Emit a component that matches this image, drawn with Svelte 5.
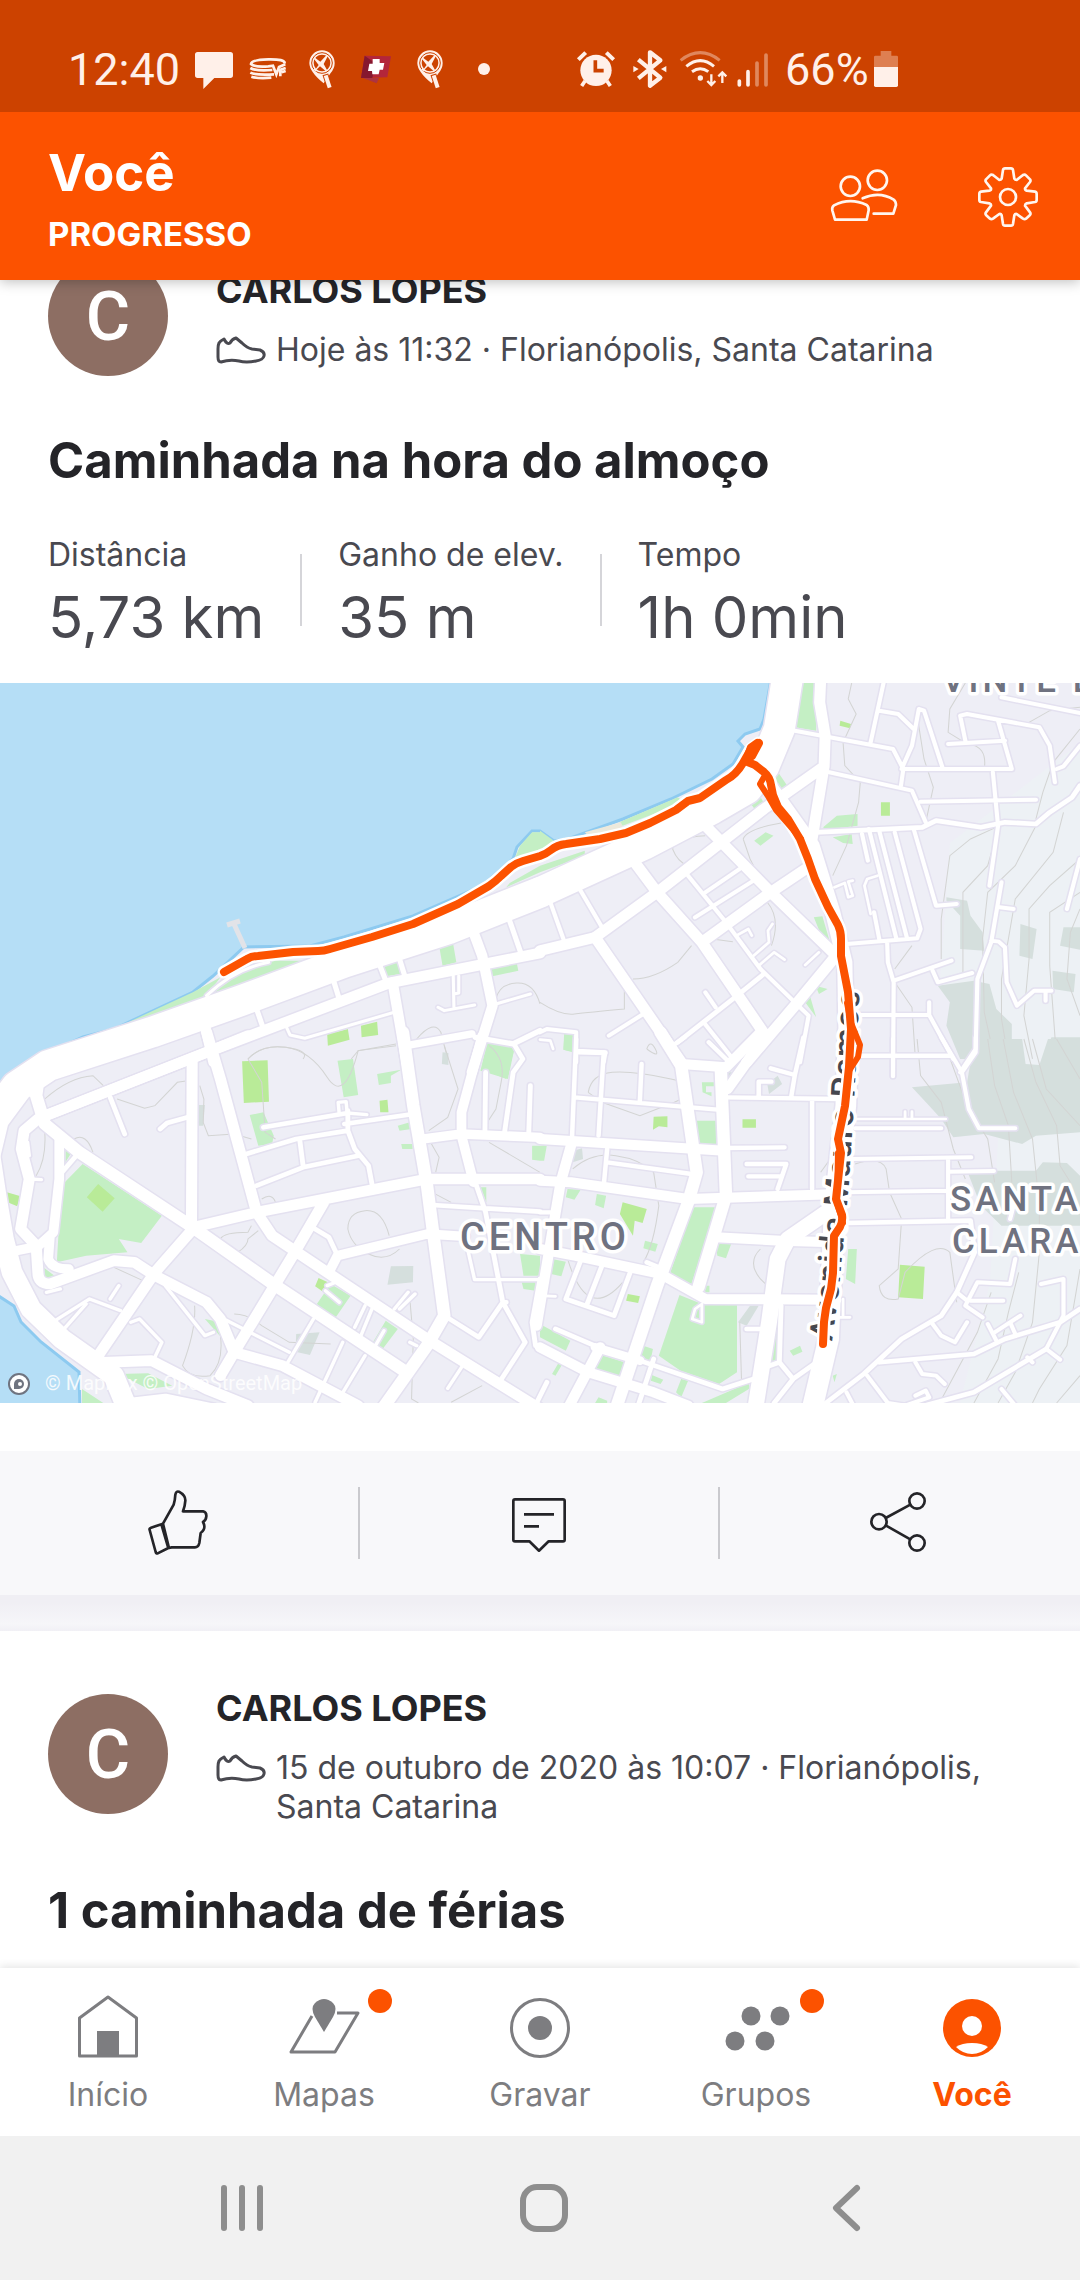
<script>
  // Map geometry is kept in four quadrant grids of 1568 x 1092 units each.
  const quadrants = [
    {
      id: 'nw',
      transform: 'translate(0 -4) scale(0.3444 0.3333)',
      contours: [
        'M720 1140Q760 1095 830 1105T880 1140M1020 1140L1040 1115L1150 1100M1210 1080Q1260 1020 1280 1060L1300 1140M1440 960Q1450 915 1500 912T1568 975'
      ],
      parks: [
        ['g', 'M1510 500L1545 460H1568V530L1490 550ZM1480 612L1568 560V580L1470 625ZM1275 800L1315 790L1325 850L1285 860ZM1110 860L1155 848L1162 885L1120 892ZM1420 870L1500 850L1505 875L1430 892ZM1415 1092L1495 1105L1470 1200L1398 1170ZM600 950L680 880L800 845L880 845L760 890ZM330 1050L560 940L640 895L590 965L400 1035Z'],
        ['l', 'M950 1065L1010 1050L1015 1082L952 1100ZM1048 1040L1095 1028L1098 1068L1050 1075Z']
      ],
      roads: [
        [92, 'M-50 1450L-20 1320L50 1222L140 1160L440 1060L700 965L1000 850L1300 750L1568 640'],
        [32, 'M120 1315L600 1120L1130 912L1568 822'],
        [30, 'M595 1040L620 1150M1140 910L1182 1160M1375 760L1400 830L1430 980L1370 1180'],
        [22, 'M1180 1100L1370 1065'],
        [16, 'M1380 1075L1490 1095L1568 1055'],
        [15, 'M745 990L765 1050M970 910L985 960M1103 860L1120 905M1160 840L1175 890M1478 720L1515 830'],
        [9, 'M832 1045L842 1068L885 1078L1145 1000M1316 890L1318 985M1378 978L1290 995L1272 985M1332 890V942L1318 945M1440 975L1540 945M600 950Q680 870 780 850']
      ]
    },
    {
      id: 'ne',
      transform: 'translate(540 -4) scale(0.3444 0.3333)',
      contours: [
        'M905 12L895 60L918 105L880 190L885 260L930 310L925 370L890 500L850 590M1095 110L1115 240L1142 325L1120 430M1235 12L1190 90L1185 160L1240 195Q1300 200 1290 270M1568 85L1480 95L1420 130M385 510Q390 475 480 470M385 510Q400 550 430 560M590 480Q600 450 700 432M590 480L610 540L620 560M660 670Q700 720 672 800M270 900Q330 900 400 850L440 800M0 970Q60 1010 100 1005T245 990V930M500 780L560 788M1030 870L1080 800M1030 910L1080 985L1090 1140',
        'M1335 440L1250 480L1190 530L1165 720V840M1330 450L1300 560L1228 640V900M1440 440L1380 560L1300 640L1285 780L1290 1000L1320 1140M1520 400L1490 520L1380 660L1360 780L1340 900V1020L1360 1140M1568 540L1480 620L1420 690V840L1405 1010L1430 1140M1568 640L1480 700V860L1500 1140M1568 690L1540 760L1530 900L1568 1010M1568 150L1490 250L1460 340L1440 420'
      ],
      parks: [
        ['g', 'M765 12H802V155L740 145ZM0 455L40 485L30 520L0 530ZM230 430L400 355L420 370L240 440ZM605 365L635 345L652 375L625 392ZM685 270L718 320L700 335L680 300ZM622 485L655 460L678 470L640 500ZM822 445L862 410L922 405V440L830 452ZM850 475L905 465L908 495L880 492ZM795 715L820 712L845 800L815 765ZM770 970L785 955L802 1015ZM800 920L835 930L810 945ZM70 1065L102 1068L95 1120L68 1112ZM550 1140L580 1115L600 1130L590 1140ZM0 560L130 515V530L0 580Z'],
        ['l', 'M872 125L903 135L900 148L870 140ZM990 370H1016V410H990Z'],
        ['d', 'M1180 655L1240 665L1250 710L1285 760L1290 815L1220 810V710L1180 665ZM1395 735L1442 750L1430 840L1392 830ZM1520 745H1568V812L1510 800ZM1488 875L1555 885L1550 940L1490 930ZM1155 920L1260 905L1305 915L1325 990L1370 1035V1140H1220L1180 1040L1190 970ZM1485 1075H1568V1140H1460Z'],
        ['s', 'M130 460L235 430L240 445L150 480Z']
      ],
      roads: [
        [90, 'M0 640L300 498L500 390L600 330L650 262L695 150L718 0'],
        [32, 'M0 815L160 775L340 640L650 390L825 262M815 0L812 70L828 170L825 260L790 480'],
        [44, 'M665 320L700 370L790 500L850 700L885 850L890 1140'],
        [32, 'M275 550L340 640L470 790L655 1070M480 440L670 640L850 820M160 775L410 1150M470 790L670 640L800 550M860 830L740 980L600 1150'],
        [12, 'M740 155L1025 210L1055 270L1048 320M1055 270H1370L1330 125M1000 0L960 190M985 95L1040 105L1085 150M1050 270L1080 200L1100 90L1115 95L1170 270M1235 185L1220 110L1240 105L1450 145L1480 200L1495 310M1185 195L1350 185M1340 55L1568 102M1500 270L1520 262L1568 200M840 280L1080 335L1120 430M1105 368L1440 362M1315 280L1330 440L1305 620M1568 540L1530 690'],
        [14, 'M800 460L1110 445L1150 425L1280 445L1350 430L1440 435L1480 400L1545 355L1568 320M400 1090L560 960L650 885'],
        [12, 'M935 465L952 545M955 450L1035 780M985 455L1065 775M1030 460L1105 750L1095 778L890 795M1085 450L1150 680L1210 675M1340 610L1310 790L1270 900L1265 1110L1220 1180M1335 685L1375 690M1310 785L1332 788L1350 805L1355 910L1385 980L1435 935L1485 935M1468 935V965M1008 790L1010 850L1027 910L1025 1190M1027 905L1195 845M1140 875L1155 910L1255 882M900 1008H1130L1200 1140M1130 970V1008M930 1130H1190M970 700L985 780'],
        [12, 'M430 590L540 730L640 870L740 970L780 1010L755 1150M480 640L580 570M450 715L620 605M200 1070L300 1005M480 940L510 985M475 1030L560 1140M0 1060L20 1050L105 1060V1150M110 1115L190 1120L185 1150M30 670L68 780M115 630L180 745'],
        [8, 'M570 770L605 750L615 770M620 830L665 790L662 755L675 735M635 860L680 820L710 842M770 858L810 820M855 625L885 612L895 655L908 650L895 608L908 605M980 590L950 600L942 620L960 705M0 1082L30 1085L38 1110']
      ]
    },
    {
      id: 'sw',
      transform: 'translate(0 356) scale(0.3444 0.3333)',
      contours: [
        'M720 60Q760 15 830 25T950 115T1040 35L1150 15M720 60L760 130L770 280L800 300M130 180Q200 115 270 110L300 140M340 180L420 208L450 200L515 130L545 125M580 140L592 180L590 250L605 290L680 285L730 300M215 300Q250 280 270 340M130 280Q135 360 105 410M1290 20L1330 150L1300 235L1245 275M1420 20Q1470 60 1455 130L1440 210L1415 250M1250 310L1275 355L1265 400M1420 310L1568 400M760 480Q790 460 800 490M640 600Q650 580 720 580L730 560M690 640Q720 620 720 600L750 575M1010 570Q1010 520 1060 515T1130 590M1010 570Q1020 620 1070 645T1160 630M320 680L415 725M565 800Q570 870 530 980Q550 1020 610 1010Q650 970 640 890M680 825Q720 825 760 860L840 910L960 915M1190 780L1200 900L1195 1080L1215 1092M1400 1040L1310 1090M1255 460L1310 490'
      ],
      parks: [
        ['g', 'M240 375L470 530L410 612L345 600L370 640L250 650L165 670L178 440ZM190 330L205 345L190 370ZM725 228L765 220L795 290L790 315L750 320ZM980 65L1025 60L1040 168L998 175ZM1095 105L1165 92L1135 110V132L1100 138ZM1155 260L1190 250L1195 270L1160 275ZM1165 315H1198V330H1168ZM1415 10L1495 22L1475 120L1395 95ZM120 680L160 712L120 720ZM960 735L1018 770L970 842L920 795ZM1120 845L1155 870L1105 938L1080 915ZM595 840L640 850L655 910ZM345 1005L430 1003L500 1040L430 1050ZM238 1050L300 1092H238ZM1545 320H1568V365L1545 362ZM1395 445H1412V490ZM1510 645L1568 650V710H1520ZM1515 730H1555V755L1520 750Z'],
        ['l', 'M703 67L777 64L781 188L708 192ZM1102 185L1125 182L1128 220H1104ZM285 435L333 478L298 518L252 475ZM20 460L60 472L50 502L22 490ZM925 717L952 730L938 758L915 742Z'],
        ['d', 'M1135 682L1200 681L1199 730L1125 737ZM860 885L928 880L900 948L858 938ZM1285 40L1302 42V78L1283 75ZM572 198H595L590 260H575Z']
      ],
      roads: [
        [32, 'M558 60L556 560M120 235L600 40L720 -10M600 -20L640 120L745 520L790 590L1240 900L1568 1110M560 565L745 520L1240 420H1568M940 490L850 650L680 940L640 1010M560 570L450 700L285 950'],
        [36, 'M110 130L105 170L130 255L230 340L560 565L800 740L1180 1000M1170 -20L1200 200L1240 440L1260 600L1290 830L1240 920L1110 1110'],
        [32, 'M110 240L70 275L62 330L85 420L60 570L105 620L110 700Q110 735 145 735L330 665L390 670L450 710L600 790L640 840L680 940L820 980L1040 1100'],
        [28, 'M0 645L110 622L155 580L172 420V300M145 590L140 660Q150 690 200 690M1230 300L1340 285L1568 295M1400 -10L1340 220V290L1375 430M960 690L980 650L1240 585L1350 592'],
        [60, 'M-32 330L-10 480L10 600L35 700L90 810L180 900L330 1010L370 1110'],
        [32, 'M300 970L440 965L600 1050L720 1100M380 1092L480 1080L620 1110'],
        [14, 'M915 570L955 595L980 650M545 235L485 252L465 270M320 175L362 285M765 265L1010 222M1000 255L1200 225M715 345L860 300L1010 275M1010 215V275L1030 330L1070 380L1080 435M870 300L880 380M745 440L880 385L1040 350M1540 140L1535 290M1410 100L1408 280M1495 20L1518 60L1490 100L1465 280M1255 498L1568 518M1290 830L1390 895L1460 790M1380 430L1410 520L1460 790L1525 910L1450 1030M1460 790L1470 790M1568 720L1545 850L1555 920M230 340L180 400'],
        [10, 'M985 225L982 190L1005 188L1008 222L1065 227M1360 640L1378 722H1568M480 740L595 890L620 880M910 840L830 980M995 910L915 1090M1060 950L990 1070M1300 1048L1340 985M640 835L840 940M160 845L260 780L350 815M320 780L345 740M380 850L405 840L470 910L445 965M190 865L250 795M1030 865L1060 800M1048 890L1080 810M1145 810L1185 760M1160 810L1205 765M1090 920L1115 875M945 755L985 790M950 740L975 730M85 420L120 422M135 760L175 750M1190 910L1210 920M85 350L80 310']
      ]
    },
    {
      id: 'se',
      transform: 'translate(540 356) scale(0.3444 0.3333)',
      contours: [
        'M140 160Q150 105 210 100T380 120T390 190L290 230L180 190L140 160M95 390Q150 340 220 350T330 400L345 500Q330 620 300 670M310 30Q320 0 335 30T310 30M640 630Q600 670 640 720L660 740M80 660Q110 760 150 775T240 730M580 850L585 1020M815 400L850 350M915 375Q990 350 1005 390L1015 460L1050 540L1040 690L985 740Q990 790 1040 780L1060 700Q1150 600 1190 640L1210 790',
        'M1095 0L1105 110L1165 190L1200 330L1235 420M1170 0L1240 200L1300 300L1320 430M1300 0L1320 140L1360 260L1370 430M1345 0L1375 160L1430 300L1450 500V640L1430 850L1380 1000L1330 1092M1405 0L1440 130L1500 260L1510 380L1540 430M1500 0L1568 120M1430 0L1470 150L1568 260M1568 690L1530 920L1450 1050L1430 1092M1390 700L1360 820L1330 960L1260 1092M1310 760L1270 880L1160 1092M1568 1010L1500 1092'
      ],
      parks: [
        ['g', 'M450 245H512V320L458 318ZM470 130H505V142H482V160H498V172L472 160ZM555 65L580 35L600 48L580 72ZM445 505H510L440 735L375 710ZM405 768L470 795H572V1000L520 1035L408 995L345 950ZM80 450L118 452L100 482L75 475ZM165 465L192 470L185 508L160 498ZM305 605L342 615L335 638L300 628ZM510 615H555L540 658L515 650ZM35 660L75 668L62 712L32 705ZM0 855L88 905L75 935L0 895ZM170 945L245 970L235 1012L160 990ZM300 920L328 930L320 968L288 955ZM895 630H920L915 735L888 720ZM725 935L755 920L762 938L735 950ZM690 820V970L670 972ZM470 1092L605 1032L610 1048L540 1092ZM325 1008L358 1022L350 1035L322 1025ZM410 1020L430 1025L410 1075L395 1060ZM35 1005L55 970L65 975L45 1010ZM0 320L20 318L12 365H0ZM470 740H492V760H475ZM850 1010L862 1005L855 1030ZM160 1092L170 1075L195 1085V1092ZM70 0H97V38L68 32Z'],
        ['l', 'M330 233L370 232V265L345 262L328 272ZM588 241H627V266H588ZM240 490L310 510L298 552L275 545L270 590L232 525ZM1045 677L1117 683L1112 780L1040 775ZM255 765L290 772L285 792L250 785Z'],
        ['d', 'M1200 0H1400L1410 75L1450 78L1475 0H1568V280L1440 290L1400 315L1290 285L1200 295L1165 240L1130 200L1080 145L1240 130L1250 70ZM1240 395H1440L1460 370L1530 372L1568 410V560H1340L1280 500ZM660 135L690 110L703 135L665 165ZM98 335L122 328L125 360L95 370ZM575 850L610 800H635L600 860ZM535 100H560L535 130Z']
      ],
      roads: [
        [36, 'M350 -20L410 80L455 400L430 490L340 740L220 1110M525 90L540 470L460 745'],
        [30, 'M410 75L540 85L640 -20M545 150L600 70L650 0M0 300L535 335M0 425L90 430L430 480L870 465M90 320L60 430L-10 860M0 630L100 650L350 705L480 780L860 782M510 595L700 605L850 610M0 925L140 1000L330 1060L430 1100M175 925L80 1110'],
        [46, 'M860 500L720 600L690 660L665 850L625 1110'],
        [60, 'M895 -20L888 200L855 500L838 900L790 1110'],
        [26, 'M160 925L290 965'],
        [13, 'M530 327L710 325M105 0L92 320M185 40L170 290M110 40L190 42M100 175L515 212M295 75L290 185M540 175L870 180M670 88L740 108L730 170M740 108L765 -5M790 180V450M600 375H715L690 450M605 412H695M195 330L185 440M195 370L440 405M635 170V128H672M490 10L540 60M385 20L420 -5M0 520H30'],
        [14, 'M290 965L530 1050L620 1020M120 660L75 780L215 830L262 700M180 680L135 800M45 870L170 925M330 960L285 1100M310 670L345 685M700 800L695 970L735 1020L680 1092M735 1020L810 965M640 990L695 970M600 870H640M20 1030L-10 1092'],
        [8, 'M920 240H1178M1060 240V218M1080 240V218M870 835H900M880 780V835M450 810L470 795V850L442 840ZM0 770L45 772'],
        [12, 'M915 268H1165M900 360L1252 355M1185 360V545M1185 398L1318 396M890 460L1185 455M920 50H1195M1025 0V112M1165 -5L1225 100L1245 210L1275 268H1380M1225 100L1265 40V-5'],
        [14, 'M890 552L1250 545L1262 640L1210 760L1165 830L1050 900L940 1005L830 1092M985 970L1260 945L1350 900L1510 850L1568 810M1080 1110L1260 1060L1470 930'],
        [12, 'M1380 660L1365 735L1270 730L1235 800L1285 835M1250 785H1345M1210 760L1240 785M1300 855L1325 905M1320 880L1395 830M1365 850L1380 885M1455 735L1520 720V830L1470 930L1510 962M1415 955L1430 970M1140 855L1165 890L1205 910L1240 850M1090 970L1110 1005L1150 1010L1175 1035M1090 1070L1120 1055L1130 1075L1060 1100M950 1010L1010 1092L1060 1100M890 1060L910 1100M1340 1050L1380 1100M1365 540L1375 500']
      ]
    }
  ];

  const fills = { g: '#c4efc4', l: '#b9eb98', d: '#d5dfdd', s: '#ece9dc' };

  const route =
    'M224 289L247 276Q252 273 258 273L293 269L318 268Q324 268 330 266L372 254L413 241L458 221L489 203Q496 198 501 193L511 184Q516 180 523 178L540 173Q546 171 551 167Q557 162 566 161L600 156L626 150L650 140L676 127L688 118L700 115L726 97Q736 92 743 80L751 66L759 60L752 73L745 78L755 82L764 89Q770 94 771 102L773 112L778 124L788 136L800 156L808 176L815 196L828 224L838 242Q841 248 841 256L841 273L848 309L851 346L849 384L845 423L838 456L841 470L836 516L842 532Q843 538 840 544L834 553L833 590L831 606L826 625L824 639L823 661';
  const routeReturn =
    'M745 78L750 64L757 59M764 94L760 101L768 113L776 127L790 143L801 156M847 320L851 340L860 362L858 374L849 388M838 470L837 520L843 540';

  const stats = [
    { label: 'Distância', value: '5,73 km' },
    { label: 'Ganho de elev.', value: '35 m' },
    { label: 'Tempo', value: '1h 0min' }
  ];
</script>

{#snippet shoe()}
  <svg class="shoe" viewBox="0 0 50 30" aria-hidden="true">
    <path d="M3 8Q4 6 8 4Q11 10 14 8Q16 4 20 3L26 8Q31 13 36 14L44 15Q49 17 48 21Q47 25 40 26Q30 28 23 26Q14 24 5 27Q2 27 2 22V14Q2 10 3 8Z" />
  </svg>
{/snippet}

{#snippet planePin()}
  <svg class="status-icon" viewBox="708 0 162 210" aria-hidden="true">
    <path d="M751 84a38 38 0 1 1 76 0q0 16-12 30L794 145Q751 110 751 84Z" fill="#fff0e9" />
    <circle cx="789" cy="84" r="31" fill="#fff0e9" stroke="#cc4200" stroke-width="3" />
    <circle cx="789" cy="84" r="25" fill="#cc4200" />
    <path d="M768 68l16 12 16-17q6-3 5 3l-11 21 10 18-4 3-17-14-11 10v7l-10-9h8l9-12-14-18Z" fill="#fff0e9" />
    <path d="M799 118l13 39" stroke="#cc4200" stroke-width="18" />
    <path d="M800 121l12 37" stroke="#fff0e9" stroke-width="12" />
  </svg>
{/snippet}

<div class="app">
  <div class="status">
    <div class="status-group">
      <span class="clock">12:40</span>
      <svg class="status-icon" viewBox="384 0 162 210" aria-hidden="true">
        <path d="M416 51H514Q522 51 522 59V121Q522 129 514 129H466L433 162V129H416Q408 129 408 121V59Q408 51 416 51Z" fill="#fff0e9" />
      </svg>
      <svg class="status-icon" viewBox="546 0 162 210" aria-hidden="true">
        <g fill="none" stroke="#fff0e9" stroke-width="8">
          <path d="M677 85Q678 72 628 73T576 87Q585 97 628 94L642 92L652 118L660 96L679 88" />
          <path d="M574 99Q590 109 640 105M574 113Q590 121 645 118M577 125Q600 132 637 128M664 124V104L680 99M668 112L680 108" />
        </g>
      </svg>
      {@render planePin()}
      <svg class="status-icon" viewBox="870 0 162 210" aria-hidden="true">
        <path d="M917 62L996 64L985 127L906 129Z" fill="#b3263a" />
        <path d="M917 62L948 84L940 129H906Z" fill="#86182f" />
        <path d="M912 129H960L953 145Z" fill="#ad3340" />
        <path d="M941 72H962V84H976L972 104H962L959 118H940L939 108H927L931 86H941Z" fill="#fff" />
      </svg>
      {@render planePin()}
      <svg class="status-icon" viewBox="1194 0 162 210" aria-hidden="true">
        <circle cx="1275" cy="102" r="18" fill="#fff0e9" />
      </svg>
    </div>
    <div class="status-group right">
      <svg class="status-icon" viewBox="30 0 162 210" aria-hidden="true">
        <circle cx="111" cy="106" r="47" fill="#fff0e9" />
        <path d="M109 76V107H134" stroke="#cc4200" stroke-width="11" fill="none" />
        <path d="M58 74L80 53M164 74L142 53" stroke="#fff0e9" stroke-width="12" />
        <path d="M78 138L68 153M144 138L154 153" stroke="#fff0e9" stroke-width="11" />
      </svg>
      <svg class="status-icon" viewBox="188 0 162 210" aria-hidden="true">
        <path d="M234 74L300 128L269 152V52L300 76L234 130" fill="none" stroke="#fff0e9" stroke-width="13" stroke-linejoin="round" />
        <path d="M219 93L235 102L219 112ZM318 93L302 102L318 112Z" fill="#fff0e9" />
      </svg>
      <svg class="status-icon" viewBox="358 0 162 210" aria-hidden="true">
        <g fill="none" stroke="#fff0e9" stroke-width="9">
          <path d="M369 76Q428 30 486 76" opacity=".4" />
          <path d="M386 94Q428 60 469 94M403 110Q428 92 452 110" />
          <path d="M461 118V148M449 138L461 150L473 138M494 144V114M482 124L494 112L506 124" stroke-width="7" />
        </g>
        <circle cx="428" cy="129" r="8" fill="#fff0e9" />
      </svg>
      <svg class="status-icon signal" viewBox="532 0 108 210" aria-hidden="true">
        <g stroke="#fff0e9" stroke-width="11" stroke-linecap="round">
          <path d="M545 138V150M571 110V150" />
          <path d="M598 84V150M625 60V150" opacity=".4" />
        </g>
      </svg>
      <span class="clock">66%</span>
      <svg class="status-icon battery" viewBox="942 0 78 210" aria-hidden="true">
        <path d="M965 48H997V62H1013Q1017 62 1017 66V98H945V66Q945 62 949 62H965Z" fill="#fff0e9" opacity=".35" />
        <path d="M945 96H1017V151Q1017 156 1012 156H950Q945 156 945 151Z" fill="#fff0e9" />
      </svg>
    </div>
  </div>

  <header>
    <div class="titles">
      <h1>Você</h1>
      <p>PROGRESSO</p>
    </div>
    <div class="header-actions">
      <button aria-label="Amigos">
        <svg viewBox="84 0 216 270" aria-hidden="true">
          <g fill="none" stroke="#fff6ef" stroke-width="8" stroke-linejoin="round" stroke-linecap="round">
            <circle cx="151" cy="106" r="29" />
            <circle cx="232" cy="88" r="29" />
            <path d="M105 206L97 178Q95 168 102 163Q150 138 200 162Q207 168 206 178L200 206Z" />
            <path d="M188 142Q238 119 281 146Q288 151 288 162L280 188H221" />
          </g>
        </svg>
      </button>
      <button aria-label="Configurações">
        <svg viewBox="516 0 216 270" aria-hidden="true">
          <g fill="none" stroke="#fff6ef" stroke-width="8" stroke-linejoin="round">
            <circle cx="624" cy="138" r="24" />
            <path d="M609 57Q610 52 615 52H633Q638 52 639 57L643 83Q645 87 650 87L669 72Q674 69 678 73L690 85Q693 89 690 93L675 112Q675 118 680 119L705 122Q710 123 710 129V147Q710 152 705 153L680 157Q675 159 675 164L690 184Q693 188 690 192L678 203Q674 206 669 203L650 189Q645 188 643 193L639 219Q638 224 633 224H615Q610 224 609 219L605 193Q603 188 598 189L579 203Q574 206 570 203L558 192Q555 188 558 184L573 164Q574 159 568 157L543 153Q538 152 538 147V129Q538 123 543 122L568 119Q574 118 573 112L558 93Q555 89 558 85L570 73Q574 69 579 72L598 87Q603 87 605 83Z" />
          </g>
        </svg>
      </button>
    </div>
  </header>

  <main>
    <article class="card scrolled">
      <div class="athlete">
        <div class="avatar">C</div>
        <div class="who">
          <h2>CARLOS LOPES</h2>
          <div class="meta">
            {@render shoe()}
            <p>Hoje às 11:32 · Florianópolis, Santa Catarina</p>
          </div>
        </div>
      </div>
      <h3>Caminhada na hora do almoço</h3>
      <dl>
        {#each stats as s}
          <div>
            <dt>{s.label}</dt>
            <dd>{s.value}</dd>
          </div>
        {/each}
      </dl>
      <svg class="map" viewBox="0 0 1080 720" role="img" aria-label="Mapa do percurso">
        <rect width="1080" height="720" fill="#eeeef6" />
        <path d="M1080 60L950 160L940 300L1000 420L990 600L960 720H1080Z" fill="#edf1f5" />
        <path
          d="M-9 -9H772L764 36L760 46L745 51L738 58L743 64L733 81L712 96L671 116L623 136L568 156L554 158L540 148L532 148L517 164L513 176L482 203L413 233L344 254L310 263L244 264L213 293L193 309L114 346L83 354L34 376L28 379L-9 412ZM-9 608L14 623L21 639L41 659L79 689L80 729H-9Z"
          fill="#b5def6" stroke="#8dcaf0" stroke-width="3" />
        {#each quadrants as q (q.id)}
          <g transform={q.transform}>
            {#each q.parks as [kind, d]}
              <path {d} fill={fills[kind]} />
            {/each}
            {#each q.contours as d}
              <path {d} fill="none" stroke="#d3d4d3" stroke-width="3" />
            {/each}
          </g>
        {/each}
        {#each quadrants as q (q.id)}
          <g class="road" transform={q.transform} stroke="#e4e1f0">
            {#each q.roads as [w, d]}
              <path {d} stroke-width={w + 9} />
            {/each}
          </g>
        {/each}
        {#each quadrants as q (q.id)}
          <g class="road" transform={q.transform} stroke="#fff">
            {#each q.roads as [w, d]}
              <path {d} stroke-width={w} />
            {/each}
          </g>
        {/each}
        <path d="M227 242L240 238M234 241L245 265" stroke="#e2e3e8" stroke-width="5" fill="none" />
        <path id="avenue" d="M821 657L828 606L838 500L843 420L849 300L850 240" fill="none" />
        <g class="label">
          <text class="street" dy="11"><textPath href="#avenue">Avenida Mauro Ramos</textPath></text>
          <text x="460" y="567" font-size="38">CENTRO</text>
          <text x="950" y="528" font-size="35">SANTA</text>
          <text x="952" y="570" font-size="35">CLARA</text>
          <text x="942" y="9" font-size="35">VINTE E</text>
        </g>
        <g fill="none" stroke-linejoin="round" stroke-linecap="round">
          <path d={route} stroke="#fff" stroke-width="13" />
          <path d={route} stroke="#fc5200" stroke-width="8" />
          <path d={routeReturn} stroke="#fc5200" stroke-width="6" />
        </g>
        <circle cx="19" cy="701" r="10" fill="#fff" stroke="#6f7480" stroke-width="2" />
        <path d="M14 706V701A5 5 0 1 1 19 706Z" fill="#6f7480" />
        <circle cx="20" cy="701" r="2" fill="#fff" />
        <text class="credit" x="45" y="707">© Mapbox © OpenStreetMap</text>
      </svg>
      <div class="actions">
        <button aria-label="Curtir">
          <svg viewBox="15 0 270 270" aria-hidden="true">
            <path d="M102 137L134 80Q138 68 139 50Q141 38 150 41Q170 52 169 68Q168 85 162 100H222Q233 103 232 115Q231 127 222 132Q229 145 224 155Q221 161 215 165L211 195Q208 208 198 208H128L120 210ZM102 137L98 142L118 210L86 226Q82 228 80 222L62 156Q60 151 66 149Z" />
          </svg>
        </button>
        <button aria-label="Comentar">
          <svg viewBox="1092 0 270 270" aria-hidden="true">
            <path d="M1155 64H1299Q1304 64 1304 69V185Q1304 190 1299 190H1256L1227 218L1198 190H1155Q1150 190 1150 185V69Q1150 64 1155 64ZM1182 109H1272M1182 145H1227" />
          </svg>
        </button>
        <button aria-label="Compartilhar">
          <svg viewBox="0 0 270 270" aria-hidden="true">
            <circle cx="186" cy="69" r="23" />
            <circle cx="72" cy="131" r="23" />
            <circle cx="186" cy="195" r="23" />
            <path d="M92 120L166 80M92 142L166 184" />
          </svg>
        </button>
      </div>
      <div class="separator"></div>
    </article>

    <article class="card">
      <div class="athlete">
        <div class="avatar">C</div>
        <div class="who">
          <h2>CARLOS LOPES</h2>
          <div class="meta">
            {@render shoe()}
            <p>15 de outubro de 2020 às 10:07 · Florianópolis, Santa Catarina</p>
          </div>
        </div>
      </div>
      <h3>1 caminhada de férias</h3>
    </article>
  </main>

  <nav class="tabs" aria-label="Principal">
    <a href="#inicio">
      <svg viewBox="0 0 72 72" aria-hidden="true">
        <path d="M36 5L64.5 26V64H7.500V26Z" class="line" />
        <path d="M25 39H47V65H25Z" class="solid" />
      </svg>
      <span>Início</span>
    </a>
    <a href="#mapas">
      <svg viewBox="0 0 72 72" aria-hidden="true">
        <path d="M49 21H70L47 60H3L24 24" class="line" />
        <path d="M36 40L27 25Q22 16 27 11Q36 3 45 11Q50 16 45 25Z" class="solid" />
      </svg>
      <i class="badge"></i>
      <span>Mapas</span>
    </a>
    <a href="#gravar">
      <svg viewBox="0 0 72 72" aria-hidden="true">
        <circle cx="36" cy="36" r="28.500" class="line" />
        <circle cx="36" cy="36" r="12" class="solid" />
      </svg>
      <span>Gravar</span>
    </a>
    <a href="#grupos">
      <svg viewBox="0 0 72 72" aria-hidden="true">
        <g class="solid">
          <circle cx="31" cy="24" r="9.500" /><circle cx="60" cy="24" r="9.500" />
          <circle cx="15" cy="49" r="9.500" /><circle cx="45" cy="49" r="9.500" />
        </g>
      </svg>
      <i class="badge"></i>
      <span>Grupos</span>
    </a>
    <a href="#voce" class="current" aria-current="page">
      <svg viewBox="0 0 72 72" aria-hidden="true">
        <circle cx="36" cy="36" r="29" fill="#fc5200" />
        <circle cx="36" cy="34" r="10" fill="#fff" />
        <path d="M20 55Q26 51 36 51T52 55Q45 62 36 62T20 55Z" fill="#fff" />
      </svg>
      <span>Você</span>
    </a>
  </nav>

  <div class="system">
    <button aria-label="Recentes">
      <svg viewBox="0 0 60 60" aria-hidden="true"><path d="M12 10V50M30 10V50M48 10V50" /></svg>
    </button>
    <button aria-label="Tela inicial">
      <svg viewBox="0 0 60 60" aria-hidden="true"><rect x="9" y="9" width="42" height="42" rx="14" /></svg>
    </button>
    <button aria-label="Voltar">
      <svg viewBox="0 0 60 60" aria-hidden="true"><path d="M40 10L19 30L40 50" /></svg>
    </button>
  </div>
</div>

<style>
  :global(body) {
    margin: 0;
    background: #fff;
  }
  .app {
    display: flex;
    flex-direction: column;
    height: 100vh;
    overflow: hidden;
    font-family: Inter, 'Liberation Sans', sans-serif;
    color: #242428;
  }
  h1, h2, h3, p, dl, dd {
    margin: 0;
  }
  button {
    display: flex;
    align-items: center;
    justify-content: center;
    padding: 0;
    border: 0;
    background: none;
  }
  .status {
    display: flex;
    flex: none;
    gap: 58px;
    height: 84px;
    padding: 28px 68px 0;
    background: #cc4200;
    color: #fff0e9;
    font-family: Roboto, sans-serif;
    z-index: 2;
  }
  .status-group {
    display: flex;
    align-items: center;
  }
  .status-icon {
    width: 54px;
    height: 70px;
  }
  .signal {
    width: 36px;
    margin-left: 4px;
    margin-right: 14px;
  }
  .battery {
    width: 26px;
    margin-left: 4px;
  }
  .clock {
    font-size: 45px;
    line-height: 54px;
    margin-right: 7px;
  }
  .right .clock {
    margin: 0;
  }
  header {
    display: flex;
    flex: none;
    align-items: center;
    justify-content: space-between;
    height: 168px;
    padding: 0 36px 0 48px;
    background: #fc5200;
    color: #fff;
    box-shadow: 0 2px 12px rgba(0, 0, 0, 0.25);
    z-index: 1;
  }
  .titles {
    padding-top: 12px;
  }
  h1 {
    font-size: 51px;
    line-height: 64px;
  }
  header p {
    font-size: 33px;
    line-height: 58px;
    font-weight: 700;
  }
  .header-actions {
    display: flex;
    gap: 72px;
  }
  .header-actions svg {
    width: 72px;
    height: 90px;
  }
  main {
    flex: 1 1 0;
    min-height: 0;
    overflow: hidden;
  }
  .card {
    padding-top: 50px;
  }
  .scrolled {
    margin-top: -74px;
  }
  .athlete {
    display: flex;
    align-items: center;
    gap: 48px;
    min-height: 120px;
    padding: 0 48px;
  }
  .avatar {
    flex: none;
    width: 120px;
    height: 120px;
    border-radius: 50%;
    background: #8d6e63;
    color: #fff;
    font: 500 68px/122px Roboto, sans-serif;
    text-align: center;
  }
  h2 {
    font-size: 36px;
    line-height: 54px;
  }
  .meta {
    display: flex;
    gap: 10px;
    color: #494950;
    font-size: 32px;
    line-height: 39px;
    padding-top: 13px;
  }
  .shoe {
    flex: none;
    width: 50px;
    height: 30px;
    margin-top: 5px;
    fill: none;
    stroke: #494950;
    stroke-width: 3;
    stroke-linejoin: round;
  }
  h3 {
    padding: 55px 48px 0;
    font-size: 49px;
    line-height: 60px;
  }
  dl {
    display: flex;
    padding: 43px 48px 25px;
    color: #494950;
  }
  dl div {
    position: relative;
    padding-right: 38px;
    margin-right: 36px;
  }
  dl div:not(:last-child)::after {
    content: '';
    position: absolute;
    right: 0;
    top: 20px;
    width: 2px;
    height: 72px;
    background: #d5d5d9;
  }
  dt {
    font-size: 32px;
    line-height: 42px;
  }
  dd {
    font-size: 58px;
    line-height: 82px;
  }
  .map {
    display: block;
    width: 100%;
  }
  .road {
    fill: none;
    stroke-linecap: round;
    stroke-linejoin: round;
  }
  .label {
    fill: #6f7280;
    stroke: #fff;
    stroke-width: 7px;
    stroke-linejoin: round;
    paint-order: stroke;
    font-family: Roboto, sans-serif;
    font-weight: 500;
    letter-spacing: 4px;
  }
  .street {
    fill: #45474f;
    font-size: 33px;
    letter-spacing: 1px;
  }
  .credit {
    fill: #fff;
    font: 20px Roboto, sans-serif;
    opacity: 0.85;
  }
  .actions {
    display: grid;
    grid-template-columns: repeat(3, 1fr);
    margin-top: 48px;
    padding: 36px 0;
    background: #f8f8fa;
  }
  .separator {
    height: 36px;
    background: linear-gradient(#f0eff4 20%, #f6f6f9 80%, #f1f0f5);
  }
  .actions button {
    height: 72px;
    border-right: 2px solid #cacace;
  }
  .actions button:last-child {
    border-right: 0;
  }
  .actions svg {
    width: 90px;
    height: 90px;
    fill: none;
    stroke: #242428;
    stroke-width: 8;
    stroke-linejoin: round;
  }
  .tabs {
    display: grid;
    flex: none;
    grid-template-columns: repeat(5, 1fr);
    height: 168px;
    background: #fff;
    box-shadow: 0 -2px 8px rgba(0, 0, 0, 0.1);
    z-index: 1;
  }
  .tabs a {
    position: relative;
    display: flex;
    flex-direction: column;
    align-items: center;
    padding-top: 24px;
    color: #7d7d80;
    font-size: 32px;
    line-height: 40px;
    text-decoration: none;
  }
  .tabs svg {
    width: 72px;
    height: 72px;
    margin-bottom: 11px;
  }
  .line {
    fill: none;
    stroke: #7d7d80;
    stroke-width: 3;
    stroke-linejoin: round;
  }
  .solid {
    fill: #7d7d80;
  }
  .badge {
    position: absolute;
    top: 21px;
    left: calc(50% + 44px);
    width: 24px;
    height: 24px;
    border-radius: 50%;
    background: #fc5200;
  }
  .tabs .current {
    color: #fc5200;
    font-weight: 700;
  }
  .system {
    display: grid;
    flex: none;
    grid-template-columns: repeat(3, 1fr);
    height: 144px;
    padding: 0 82px 0 91px;
    background: #f1f1f1;
    z-index: 2;
  }
  .system svg {
    width: 60px;
    height: 60px;
    fill: none;
    stroke: #8e8e8e;
    stroke-width: 6;
    stroke-linecap: round;
    stroke-linejoin: round;
  }
</style>
